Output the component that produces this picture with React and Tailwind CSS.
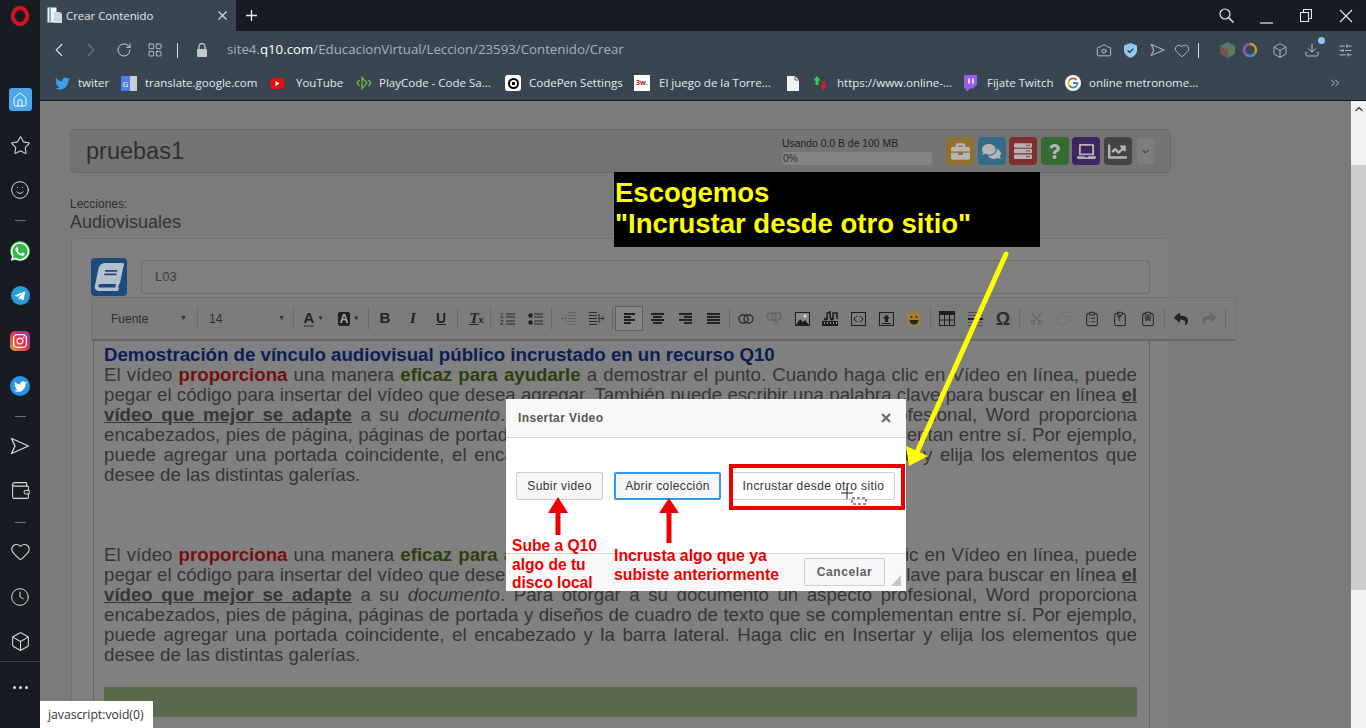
import React from "react";
import {
  ChevronLeft, ChevronRight, RotateCw, LayoutGrid, Camera, Heart, Box, Download, SlidersHorizontal,
  Star, Smile, Wallet, Clock, Home, ChevronDown, ChevronUp, ChevronsRight, Scissors, Copy, Clipboard, ClipboardList,
} from "lucide-react";
import {
  FaReply, FaShare, FaBriefcase, FaComments, FaServer, FaQuestion, FaLaptop, FaChartLine,
  FaWhatsapp, FaTelegramPlane, FaInstagram, FaTwitter, FaBook,
} from "react-icons/fa";

const PlaneIcon = ({ w = 20, h = 18, color = "currentColor", sw = 1.3 }) => (
  <svg width={w} height={h} viewBox="0 0 20 18"><path d="M1.500 1.500L18.500 9L1.500 16.500L5 9z" fill="none" stroke={color} strokeWidth={sw} strokeLinejoin="round" /></svg>
);

const Bm = ({ cls, iconCls, icon, label }) => (
  <div className={`flex items-center shrink-0 whitespace-nowrap ${cls}`}>
    <div className={`w-[16px] h-[16px] flex items-center justify-center shrink-0 ${iconCls}`}>{icon}</div>
    <span>{label}</span>
  </div>
);

const Sep = ({ cls }) => <div className={`w-[11px] h-px bg-[#6b7078] shrink-0 ${cls}`} />;
const SI = ({ cls, children }) => <div className={`h-[19px] w-full flex items-center justify-center shrink-0 ${cls}`}>{children}</div>;
const Slot = ({ cls = "", children }) => <div className={`w-[16px] h-[16px] flex items-center justify-center shrink-0 ${cls}`}>{children}</div>;

const Para = () => (
  <p className="text-justify text-[#363636]">
    El vídeo <b className="text-[#741010]">proporciona</b> una manera <b className="text-[#2c3f0e]">eficaz para ayudarle</b> a demostrar el punto. Cuando haga clic en Vídeo en línea, puede pegar el código para insertar del vídeo que desea agregar. También puede escribir una palabra clave para buscar en línea <b className="underline">el vídeo que mejor se adapte</b> a su <i>documento</i>. Para otorgar a su documento un aspecto profesional, Word proporciona encabezados, pies de página, páginas de portada y diseños de cuadro de texto que se complementan entre sí. Por ejemplo, puede agregar una portada coincidente, el encabezado y la barra lateral. Haga clic en Insertar y elija los elementos que desee de las distintas galerías.
  </p>
);

const Tb = ({ children, cls = "" }) => (
  <div className={`w-[28px] h-[24px] flex items-center justify-center shrink-0 ${cls}`}>{children}</div>
);
const TSep = () => <div className="w-px h-[22px] bg-[#6a6a6a] mx-[2px] shrink-0" />;

const Lines = ({ rows, color = "#222" }) => (
  <svg width="15" height="13" viewBox="0 0 15 13">
    {rows.map(([x, y, w, h = 2], i) => <rect key={i} x={x} y={y} width={w} height={h} fill={color} />)}
  </svg>
);

const Square = ({ color, children }) => (
  <div className={`w-[28px] h-[28px] rounded-[4px] flex items-center justify-center text-[#b4b4b4] shrink-0 ${color}`}>{children}</div>
);

export default function App() {
  return (
    <div className="relative w-[1366px] h-[728px] overflow-hidden flex bg-[#181c22] font-['Liberation_Sans',sans-serif]">
      {/* Opera sidebar */}
      <aside className="w-[40px] shrink-0 flex flex-col items-center text-[#d6d8da] bg-[#181c22]">
        <svg width="20" height="22" viewBox="0 0 20 22" className="mt-[5px] shrink-0">
          <ellipse cx="10" cy="11" rx="7.200" ry="8.200" fill="none" stroke="#d8111d" strokeWidth="4" />
        </svg>
        <div className="mt-[61px] w-[23px] h-[23px] rounded-[3px] bg-[#4aa8e8] flex items-center justify-center shrink-0">
          <Home size={16} strokeWidth={1.5} className="text-white" />
        </div>
        <SI cls="mt-[25px]"><Star size={21} strokeWidth={1.2} /></SI>
        <SI cls="mt-[25px]"><Smile size={20} strokeWidth={1.2} /></SI>
        <Sep cls="mt-[21px]" />
        <div className="mt-[20px] w-[20px] h-[20px] rounded-full bg-[#37b84a] flex items-center justify-center shrink-0"><FaWhatsapp size={21} className="text-white" /></div>
        <div className="mt-[25px] w-[19px] h-[19px] rounded-full bg-[#2b9bd8] flex items-center justify-center shrink-0"><FaTelegramPlane size={12} className="text-white" /></div>
        <div className="mt-[26px] w-[20px] h-[20px] rounded-[5px] bg-[linear-gradient(45deg,#f0a030,#e0304f_50%,#8b3ab0)] flex items-center justify-center shrink-0"><FaInstagram size={16} className="text-white" /></div>
        <div className="mt-[25px] w-[20px] h-[20px] rounded-full bg-[#2b93e4] flex items-center justify-center shrink-0"><FaTwitter size={13} className="text-white" /></div>
        <Sep cls="mt-[20px]" />
        <div className="mt-[19px] h-[20px] flex items-center shrink-0"><PlaneIcon /></div>
        <SI cls="mt-[25px]"><Wallet size={21} strokeWidth={1.2} /></SI>
        <Sep cls="mt-[22px]" />
        <SI cls="mt-[19px]"><Heart size={21} strokeWidth={1.2} /></SI>
        <SI cls="mt-[26px]"><Clock size={20} strokeWidth={1.2} /></SI>
        <SI cls="mt-[26px]"><Box size={21} strokeWidth={1.2} /></SI>
        <div className="w-full h-px bg-[#3c4047] mt-[10px] shrink-0" />
        <div className="mt-[24px] flex gap-[3px] shrink-0">
          <span className="w-[3px] h-[3px] rounded-full bg-[#ddd]" />
          <span className="w-[3px] h-[3px] rounded-full bg-[#ddd]" />
          <span className="w-[3px] h-[3px] rounded-full bg-[#ddd]" />
        </div>
      </aside>

      <div className="flex-1 flex flex-col min-w-0">
        {/* Tab bar */}
        <div className="h-[31px] flex items-center bg-[#181c22] text-white shrink-0">
          <div className="w-[196px] h-full bg-[#3a4552] flex items-center pl-[7px] pr-[9px] font-['Open_Sans',sans-serif] text-[11.400px] text-[#e8e8e8]">
            <svg width="16" height="17" viewBox="0 0 16 17" className="shrink-0"><rect x="0.500" y="0.500" width="9" height="15" fill="#f2f4f6" /><rect x="2" y="1" width="2" height="14" fill="#7fb0e0" /><path d="M7 5h6l2 2v9H7z" fill="#cfd6dd" /></svg>
            <span className="ml-[3px] flex-1 whitespace-nowrap">Crear Contenido</span>
            <svg width="9" height="9" viewBox="0 0 9 9"><path d="M0.500 0.500L8.500 8.500M8.500 0.500L0.500 8.500" stroke="#ddd" strokeWidth="1.100" /></svg>
          </div>
          <svg width="11" height="11" viewBox="0 0 11 11" className="ml-[10px]"><path d="M5.500 0v11M0 5.500h11" stroke="#eee" strokeWidth="1.300" /></svg>
          <div className="flex-1" />
          <svg width="15" height="15" viewBox="0 0 15 15"><circle cx="6" cy="6" r="5" fill="none" stroke="#e8e8e8" strokeWidth="1.200" /><path d="M9.500 9.500L14.500 14.500" stroke="#e8e8e8" strokeWidth="1.400" /></svg>
          <svg width="13" height="13" viewBox="0 0 13 13" className="ml-[26px] translate-y-[2px]"><path d="M0 12h13" stroke="#e8e8e8" strokeWidth="1.200" /></svg>
          <svg width="12" height="13" viewBox="0 0 12 13" className="ml-[27px]"><path d="M0.500 3.500h8v9h-8zM3.500 3.500v-3h8v9h-3" fill="none" stroke="#e8e8e8" strokeWidth="1.100" /></svg>
          <svg width="14" height="14" viewBox="0 0 14 14" className="ml-[27px] mr-[13px]"><path d="M1 1L13 13M13 1L1 13" stroke="#e8e8e8" strokeWidth="1.100" /></svg>
        </div>
        {/* Address bar */}
        <div className="h-[38px] flex items-center bg-[#3a4552] text-[#d8dadd] shrink-0">
          <Slot cls="ml-[11px]"><ChevronLeft size={22} strokeWidth={1.3} className="shrink-0" /></Slot>
          <Slot cls="ml-[16px]"><ChevronRight size={22} strokeWidth={1.3} className="text-[#6a727d] shrink-0" /></Slot>
          <Slot cls="ml-[17px]"><RotateCw size={16} strokeWidth={1.4} /></Slot>
          <Slot cls="ml-[15px]"><LayoutGrid size={16} strokeWidth={1.2} /></Slot>
          <div className="ml-[14px] w-px h-[15px] bg-[#d8dadd]" />
          <Slot cls="ml-[16px]">
            <svg width="10" height="14" viewBox="0 0 10 14"><path d="M2 6V3.500a3 3 0 0 1 6 0V6" fill="none" stroke="#c4c8cc" strokeWidth="1.300" /><rect x="0" y="6" width="10" height="8" rx="1" fill="#c4c8cc" /></svg>
          </Slot>
          <div className="ml-[17px] font-['Open_Sans',sans-serif] text-[13.270px] text-[#a9b0b9] whitespace-nowrap">
            site4.<span className="text-white">q10.com</span>/EducacionVirtual/Leccion/23593/Contenido/Crear
          </div>
          <div className="flex-1" />
          <Slot><Camera size={17} strokeWidth={1.2} /></Slot>
          <Slot cls="ml-[10px]"><svg width="13" height="15" viewBox="0 0 14 16"><path d="M7 0l7 2.500V8c0 4-3.500 6.500-7 8-3.500-1.500-7-4-7-8V2.500z" fill="#8cc8f2" /><path d="M4 8l2.200 2L10 6" stroke="#2b3642" strokeWidth="1.500" fill="none" /></svg></Slot>
          <Slot cls="ml-[11px]"><PlaneIcon w={15} h={14} color="#b6bac0" sw={1.400} /></Slot>
          <Slot cls="ml-[9px]"><Heart size={17} strokeWidth={1.100} /></Slot>
          <div className="ml-[8px] w-px h-[15px] bg-[#d8dadd]" />
          <Slot cls="ml-[20px]"><svg width="15" height="16" viewBox="0 0 15 16"><path d="M7.500 0L15 4v8l-7.500 4z" fill="#5f7a5c" /><path d="M7.500 0L0 4v8l7.500 4z" fill="#7a5448" /><path d="M7.500 0L15 4l-7.500 4L0 4z" fill="#527a70" /></svg></Slot>
          <Slot cls="ml-[7px]"><svg width="16" height="16" viewBox="0 0 16 16"><circle cx="8" cy="8" r="6" fill="none" stroke="#c9a227" strokeWidth="2.400" /><path d="M8 2a6 6 0 0 0-4 10.500" fill="none" stroke="#8a4fc0" strokeWidth="2.400" /><path d="M4 12.500A6 6 0 0 0 13 11" fill="none" stroke="#2f8fe0" strokeWidth="2.400" /></svg></Slot>
          <Slot cls="ml-[14px]"><Box size={17} strokeWidth={1.100} /></Slot>
          <Slot cls="ml-[16px] relative">
            <Download size={16} strokeWidth={1.200} />
            <span className="absolute -top-[5px] -right-[5px] w-[7px] h-[7px] rounded-full bg-[#8cc8f2]" />
          </Slot>
          <Slot cls="ml-[17px] mr-[13px]"><SlidersHorizontal size={15} strokeWidth={1.200} /></Slot>
        </div>
        {/* Bookmarks */}
        <div className="h-[31px] flex items-center bg-[#3a4552] text-[#e6e8ea] text-[11.500px] font-['Open_Sans',sans-serif] pl-[14px] pb-[3px] shrink-0">
          <Bm cls="w-[67px]" iconCls="mr-[8px]" icon={<FaTwitter size={15} className="text-[#3aa0e8]" />} label="twiter" />
          <Bm cls="w-[148px]" iconCls="mr-[8px]" icon={<div className="w-[16px] h-[15px] flex text-[8px] leading-[15px] text-white"><span className="w-[9px] bg-[#4a80e8] text-center">G</span><span className="w-[7px] bg-[#c8ccd0]" /></div>} label="translate.google.com" />
          <Bm cls="w-[87px]" iconCls="mr-[11px]" icon={<svg width="14" height="11" viewBox="0 0 14 11"><rect width="14" height="11" rx="2.500" fill="#e01010" /><path d="M5.500 3l4 2.500-4 2.500z" fill="#fff" /></svg>} label="YouTube" />
          <Bm cls="w-[149px]" iconCls="mr-[7px]" icon={<svg width="16" height="14" viewBox="0 0 16 14"><path d="M3.500 4L1 7l2.500 3M12.500 4L15 7l-2.500 3M6 1.500L11 7l-5 5.500z" fill="none" stroke="#7cb342" strokeWidth="1.300" /></svg>} label="PlayCode - Code Sa..." />
          <Bm cls="w-[129px]" iconCls="mr-[8px]" icon={<div className="w-[16px] h-[16px] rounded-[3px] bg-white flex items-center justify-center"><div className="w-[11px] h-[11px] rounded-full border-2 border-black flex items-center justify-center"><div className="w-[3px] h-[3px] bg-black" /></div></div>} label="CodePen Settings" />
          <Bm cls="w-[151px]" iconCls="mr-[9px]" icon={<div className="w-[16px] h-[16px] bg-white text-[#b02020] text-[7px] font-bold flex items-center justify-center">3w.</div>} label="El juego de la Torre..." />
          <Bm cls="w-[27px]" iconCls="" icon={<svg width="12" height="15" viewBox="0 0 12 15"><path d="M0 0h8l4 4v11H0z" fill="#f2f2f2" /><path d="M8 0v4h4" fill="none" stroke="#3a4552" strokeWidth="0.800" /></svg>} label="" />
          <Bm cls="w-[150px]" iconCls="mr-[9px]" icon={<svg width="15" height="16" viewBox="0 0 15 16"><path d="M4 1l3.500 4.500H5.500V10h-3V5.500H.5z" fill="#30d050" /><path d="M10.500 15L7 10.500h2V6h3v4.500h2z" fill="#d82020" /></svg>} label="https://www.online-..." />
          <Bm cls="w-[103px]" iconCls="mr-[9px]" icon={<svg width="14" height="16" viewBox="0 0 14 16"><path d="M1 0h13v9.500L10 13.500H7l-2.500 2.500H3v-2.500H1z" fill="#9b5cf0" /><path d="M6 3.500v5M10 3.500v5" stroke="#fff" strokeWidth="1.500" /></svg>} label="Fíjate Twitch" />
          <Bm cls="" iconCls="mr-[8px]" icon={<svg width="16" height="16" viewBox="0 0 16 16"><circle cx="8" cy="8" r="8" fill="#fff" /><path d="M11.500 4.800A4.500 4.500 0 0 0 4.200 5.600" fill="none" stroke="#e04434" strokeWidth="1.800" /><path d="M4.200 5.600a4.500 4.500 0 0 0 0 4.800" fill="none" stroke="#f4b400" strokeWidth="1.800" /><path d="M4.200 10.400A4.500 4.500 0 0 0 11.800 10.500" fill="none" stroke="#2fa24f" strokeWidth="1.800" /><path d="M8 8h4.500a4.500 4.500 0 0 1-.7 2.500" fill="none" stroke="#4285f4" strokeWidth="1.800" /></svg>} label="online metronome..." />
          <div className="flex-1" />
          <ChevronsRight size={14} strokeWidth={1.300} className="mr-[24px]" />
        </div>

        {/* Page */}
        <div className="flex-1 flex min-h-0 border-t border-[#15181d]">
          <main className="flex-1 bg-[#7b7b7b] pl-[30px] pt-[28px] overflow-hidden min-w-0">
            {/* Title bar */}
            <div className="w-[1101px] h-[44px] rounded-[4px] border border-[#696969] bg-[#747474] flex items-center pl-[15px] pr-[16px]">
              <span className="text-[23.500px] text-[#303030] translate-y-[1px]">pruebas1</span>
              <div className="flex-1" />
              <div className="w-[150px] mr-[14px] text-[10.400px] leading-[11px] text-[#202020]">
                <div>Usando 0.0 B de 100 MB</div>
                <div className="mt-[3px] h-[13px] rounded-[3px] bg-[#848484] pl-[1px] text-[10.400px] leading-[13px] text-[#303030]">0%</div>
              </div>
              <div className="flex gap-[3.500px] items-center">
                <Square color="bg-[#92702d]"><FaBriefcase size={19} /></Square>
                <Square color="bg-[#336d85]"><FaComments size={19} /></Square>
                <Square color="bg-[#822e2c]"><FaServer size={18} /></Square>
                <Square color="bg-[#356b34]"><FaQuestion size={15} /></Square>
                <Square color="bg-[#3e2463]"><FaLaptop size={19} /></Square>
                <Square color="bg-[#444444]"><FaChartLine size={19} /></Square>
                <div className="ml-[2px] w-[17px] h-[26px] rounded-[3px] bg-[#7d7d7d] flex items-center justify-center text-[#222]"><ChevronDown size={11} /></div>
              </div>
            </div>

            {/* Breadcrumb */}
            <div className="mt-[25px] text-[12px] leading-[12px] text-[#2e2e2e]">Lecciones:</div>
            <div className="mt-[1px] text-[18px] leading-[22px] text-[#333]">Audiovisuales</div>

            {/* Card */}
            <div className="mt-[5px] ml-[1px] w-[1099px] h-[520px] rounded-t-[4px] border border-[#727272] bg-[#808080] pl-[19px] pt-[19px]">
              <div className="flex items-center gap-[14px]">
                <div className="w-[36px] h-[38px] rounded-[4px] bg-[#1c4a7c] flex items-center justify-center">
                  <FaBook size={28} className="text-[#b5c0cc] -skew-x-12" />
                </div>
                <div className="w-[1009px] h-[34px] rounded-[4px] border border-[#6c6c6c] bg-[#7f7f7f] pl-[13px] flex items-center text-[13px] text-[#3c3c3c]">L03</div>
              </div>
              {/* Toolbar */}
              <div className="mt-[1px] w-[1145px] h-[44px] border border-[#717171] border-b-2 border-b-[#666] bg-[#7c7c7c] flex items-center text-[#222]">
                <div className="w-[103px] pl-[19px] pr-[8px] flex items-center justify-between text-[12px] text-[#2e2e2e] shrink-0"><span>Fuente</span><span className="text-[7px]">▼</span></div>
                <TSep />
                <div className="w-[91px] pl-[9px] pr-[6px] flex items-center justify-between text-[12px] text-[#2e2e2e] shrink-0"><span>14</span><span className="text-[7px]">▼</span></div>
                <TSep />
                <div className="w-[35px] flex items-center justify-center shrink-0"><span className="font-bold text-[15px] leading-[15px] border-b-2 border-[#555] text-[#222]">A</span><span className="text-[6px] ml-[3px]">▼</span></div>
                <div className="w-[35px] flex items-center justify-center shrink-0"><span className="font-bold text-[12px] leading-[14px] bg-[#222] text-[#aaa] px-[2px] rounded-[2px]">A</span><span className="text-[6px] ml-[3px]">▼</span></div>
                <TSep />
                <Tb><span className="font-bold text-[15px]">B</span></Tb>
                <Tb><span className="font-bold italic text-[15px] font-['Liberation_Serif',serif]">I</span></Tb>
                <Tb><span className="font-bold text-[14px] underline">U</span></Tb>
                <TSep />
                <Tb><span className="relative font-bold italic text-[15px] font-['Liberation_Serif',serif] underline">T<span className="absolute left-[9px] top-[7px] not-italic text-[9px] font-['Liberation_Sans',sans-serif]">x</span></span></Tb>
                <TSep />
                <Tb>
                  <svg width="15" height="14" viewBox="0 0 15 14"><text x="0" y="6" fontSize="6.500" fill="#222" fontFamily="Liberation Sans">1</text><text x="0" y="13" fontSize="6.500" fill="#222" fontFamily="Liberation Sans">2</text><path d="M6 2h9M6 5h9M6 9h9M6 12h9" stroke="#222" strokeWidth="1" /></svg>
                </Tb>
                <Tb>
                  <svg width="15" height="14" viewBox="0 0 15 14"><circle cx="2.500" cy="3.500" r="2.200" fill="#222" /><circle cx="2.500" cy="10.500" r="2.200" fill="#222" /><path d="M6 2h9M6 5h9M6 9h9M6 12h9" stroke="#222" strokeWidth="1" /></svg>
                </Tb>
                <TSep />
                <Tb>
                  <svg width="15" height="13" viewBox="0 0 15 13"><path d="M7 .5h8M7 3.500h8M7 6.500h8M7 9.500h8M7 12.500h8" stroke="#626262" /><path d="M5 2v9M5 6.500H0M2 4.500l-2 2 2 2" stroke="#626262" fill="none" /></svg>
                </Tb>
                <Tb>
                  <svg width="15" height="13" viewBox="0 0 15 13"><path d="M0 .5h8M0 3.500h8M0 6.500h8M0 9.500h8M0 12.500h8" stroke="#2a2a2a" /><path d="M10 2v9M10 6.500h5M13 4.500l2 2-2 2" stroke="#2a2a2a" fill="none" /></svg>
                </Tb>
                <TSep />
                <Tb cls="h-[25px] border border-[#5e5e5e] bg-[#858585]"><Lines rows={[[2, 1, 11], [2, 4, 7], [2, 7, 11], [2, 10, 7]]} /></Tb>
                <Tb><Lines rows={[[1, 1, 13], [3, 4, 9], [1, 7, 13], [3, 10, 9]]} /></Tb>
                <Tb><Lines rows={[[1, 1, 13], [6, 4, 8], [1, 7, 13], [6, 10, 8]]} /></Tb>
                <Tb><Lines rows={[[1, 1, 13], [1, 4, 13], [1, 7, 13], [1, 10, 13]]} /></Tb>
                <TSep />
                <Tb><svg width="16" height="10" viewBox="0 0 16 10"><rect x="1" y="1" width="9" height="8" rx="4" fill="none" stroke="#2c2c2c" strokeWidth="1.400" /><rect x="6" y="1" width="9" height="8" rx="4" fill="none" stroke="#2c2c2c" strokeWidth="1.400" /></svg></Tb>
                <Tb><svg width="16" height="13" viewBox="0 0 16 13"><rect x="1" y="1" width="9" height="7" rx="3.500" fill="none" stroke="#676767" strokeWidth="1.400" /><rect x="6" y="1" width="9" height="7" rx="3.500" fill="none" stroke="#676767" strokeWidth="1.400" /><path d="M8 8l4 5M12 8l-4 5" stroke="#676767" strokeWidth="1.200" /></svg></Tb>
                <Tb><svg width="15" height="14" viewBox="0 0 15 14"><rect x="0.500" y="0.500" width="14" height="13" fill="#8a8a8a" stroke="#1e1e1e" /><path d="M1 13l4-6 3 3 2-2 4 5z" fill="#1e1e1e" /><circle cx="10" cy="4" r="1.500" fill="#ddd" /></svg></Tb>
                <Tb><svg width="16" height="16" viewBox="0 0 16 16"><rect x="0" y="10" width="16" height="5" fill="#1e1e1e" /><path d="M2 11h1v2H2zM5 11h1v2H5zM8 11h1v2H8zM11 11h1v2h-1zM14 11h1v2h-1z" fill="#999" /><path d="M5 9V2l3-1v6M11 9V2h4v6" fill="none" stroke="#1e1e1e" strokeWidth="1.600" /><circle cx="3.500" cy="8" r="1.600" fill="#1e1e1e" /><circle cx="9.500" cy="8" r="1.600" fill="#1e1e1e" /></svg></Tb>
                <Tb><svg width="15" height="14" viewBox="0 0 15 14"><rect x="0.500" y="0.500" width="14" height="13" fill="none" stroke="#1e1e1e" /><path d="M6 4L3 7l3 3M9 4l3 3-3 3" fill="none" stroke="#1e1e1e" /></svg></Tb>
                <Tb><svg width="15" height="14" viewBox="0 0 15 14"><rect x="0.500" y="0.500" width="14" height="13" fill="none" stroke="#1e1e1e" /><path d="M7.500 2.500L11 6.500H9V10H6V6.500H4zM3 11h9v1H3z" fill="#1e1e1e" /></svg></Tb>
                <Tb><svg width="16" height="16" viewBox="0 0 16 16"><circle cx="8" cy="8" r="7.500" fill="#a3802f" /><circle cx="5.500" cy="6" r="1" fill="#2a2412" /><circle cx="10.500" cy="6" r="1" fill="#2a2412" /><path d="M3.500 9h9a4.500 4.500 0 0 1-9 0z" fill="#2a2412" /></svg></Tb>
                <TSep />
                <Tb><svg width="16" height="15" viewBox="0 0 16 15"><rect x="0.500" y="0.500" width="15" height="14" fill="none" stroke="#1e1e1e" /><rect x="0" y="0" width="16" height="4" fill="#1e1e1e" /><path d="M5.500 4v10M10.500 4v10M1 9h14" stroke="#1e1e1e" /></svg></Tb>
                <Tb><svg width="15" height="14" viewBox="0 0 15 14"><path d="M0 .5h15M0 3.500h15M0 10.500h15M0 13.500h15" stroke="#505050" /><rect x="0" y="6" width="15" height="2" fill="#1e1e1e" /></svg></Tb>
                <Tb><span className="text-[18px] font-bold leading-none text-[#2a2a2a]">Ω</span></Tb>
                <TSep />
                <Tb><Scissors size={15} strokeWidth={2} className="text-[#686868] -rotate-90" /></Tb>
                <Tb><Copy size={15} strokeWidth={1.400} className="text-[#6e6e6e] scale-x-[-1]" /></Tb>
                <Tb><ClipboardList size={16} strokeWidth={1.500} /></Tb>
                <Tb cls="relative"><Clipboard size={16} strokeWidth={1.500} /><span className="absolute left-[11px] top-[8px] text-[7px] leading-[8px] font-bold">T</span></Tb>
                <Tb cls="relative"><Clipboard size={16} strokeWidth={1.500} /><span className="absolute left-[10.500px] top-[8px] text-[7px] leading-[8px] font-bold">W</span></Tb>
                <TSep />
                <Tb><FaReply size={14} /></Tb>
                <Tb><FaShare size={14} className="text-[#686868]" /></Tb>
                <TSep />
              </div>
              {/* Editor */}
              <div className="mt-[-1px] ml-[2px] w-[1057px] h-[400px] rounded-t-[3px] border border-[#666] bg-[#808080] pl-[10px] pr-[12px] pt-[4px] text-[18.667px] leading-[20px]">
                <h3 className="font-bold text-[#0b1e55]">Demostración de vínculo audiovisual público incrustado en un recurso Q10</h3>
                <Para />
                <div className="h-[60px]" />
                <Para />
                <div className="mt-[22px] h-[30px] bg-[#5b6a4b]" />
              </div>
            </div>
          </main>
          {/* Scrollbar */}
          <div className="w-[15px] bg-[#f1f1f1] flex flex-col items-center shrink-0">
            <ChevronUp size={12} strokeWidth={3} className="text-[#505050] mt-[2px] shrink-0" />
            <div className="w-full h-[425px] mt-[50px] bg-[#cdcdcd]" />
          </div>
        </div>
      </div>

      {/* Status */}
      <div className="absolute left-[40px] bottom-0 w-[113px] h-[27px] bg-white text-[12.200px] leading-[27px] pl-[8px] text-[#333] font-['Open_Sans',sans-serif]">javascript:void(0)</div>

      {/* Modal */}
      <div className="absolute left-[506px] top-[399px] w-[400px] h-[192px] bg-white flex flex-col">
        <div className="h-[39px] bg-[#f8f8f8] border-b border-[#d4d4d4] flex items-center justify-between pl-[12px] pr-[15px] shrink-0">
          <span className="font-bold text-[12px] tracking-[0.400px] text-[#555]">Insertar Video</span>
          <svg width="10" height="10" viewBox="0 0 10 10"><path d="M1 1L9 9M9 1L1 9" stroke="#6e6e6e" strokeWidth="2.400" /></svg>
        </div>
        <div className="flex-1 flex items-start pl-[10px] pt-[34px] gap-[11px] text-[12px] tracking-[0.400px] text-[#333]">
          <div className="w-[87px] h-[28px] rounded-[2px] border border-[#ccc] bg-[#f6f6f6] flex items-center justify-center">Subir video</div>
          <div className="w-[107px] h-[28px] rounded-[2px] border-2 border-[#3498ea] bg-[#f6f6f6] flex items-center justify-center">Abrir colección</div>
          <div className="w-[163px] h-[28px] rounded-[2px] border border-[#ccc] bg-white flex items-center justify-center whitespace-nowrap">Incrustar desde otro sitio</div>
        </div>
        <div className="h-[38px] bg-[#f8f8f8] border-t border-[#d4d4d4] flex items-start justify-end pt-[4px] pr-[21px] shrink-0">
          <div className="w-[81px] h-[28px] rounded-[2px] border border-[#ccc] bg-[#f6f6f6] flex items-center justify-center text-[12px] tracking-[0.600px] font-bold text-[#5f5f5f]">Cancelar</div>
        </div>
        <svg width="10" height="11" viewBox="0 0 10 11" className="absolute right-[5px] bottom-[5px]"><path d="M10 0v11H0z" fill="#c4c4c4" /></svg>
      </div>

      {/* Annotations */}
      <div className="absolute left-[614px] top-[172px] w-[426px] h-[75px] bg-black text-[#ffff00] font-bold text-[27.500px] leading-[31px] pt-[5px] pl-[1px]">
        Escogemos<br />"Incrustar desde otro sitio"
      </div>
      <div className="absolute left-[729px] top-[464px] w-[176px] h-[46px] border-4 border-[#ee0000]" />
      <svg className="absolute inset-0 pointer-events-none" width="1366" height="728" viewBox="0 0 1366 728">
        <line x1="1006" y1="254" x2="918" y2="450" stroke="#ffff00" strokeWidth="5" strokeLinecap="round" />
        <path d="M906 446L928 456L909 466z" fill="#ffff00" />
        <line x1="558" y1="510" x2="558" y2="535" stroke="#ee0000" strokeWidth="5" />
        <path d="M548 513L558 497L568 513z" fill="#ee0000" />
        <line x1="669" y1="510" x2="669" y2="543" stroke="#ee0000" strokeWidth="5" />
        <path d="M659 513L669 498L679 513z" fill="#ee0000" />
        <path d="M841 493h12M847 487v12" stroke="#222" strokeWidth="1" />
        <rect x="852" y="498" width="14" height="6" fill="none" stroke="#222" strokeWidth="1" strokeDasharray="3 2" />
      </svg>
      <div className="absolute left-[512px] top-[537px] text-[#ee0000] font-bold text-[15.600px] leading-[18.500px]">Sube a Q10<br />algo de tu<br />disco local</div>
      <div className="absolute left-[614px] top-[547px] text-[#ee0000] font-bold text-[15.800px] leading-[18.500px]">Incrusta algo que ya<br />subiste anteriormente</div>
    </div>
  );
}
